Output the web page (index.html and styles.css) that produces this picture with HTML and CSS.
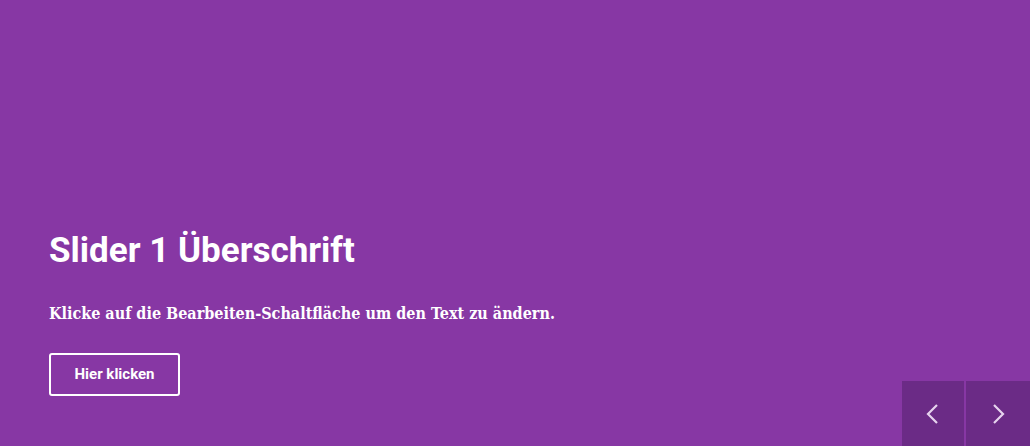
FILE: index.html
```html
<!DOCTYPE html>
<html lang="de">
<head>
<meta charset="utf-8">
<link rel="stylesheet" href="styles.css">
</head>
<body>
<section class="slider">
  <div class="slide-content">
    <h1 class="slide-title">Slider 1 Überschrift</h1>
    <p class="slide-text">Klicke auf die Bearbeiten-Schaltfläche um den Text zu ändern.</p>
    <a class="slide-btn" href="#">Hier klicken</a>
  </div>
  <div class="slider-nav">
    <button class="nav-btn" aria-label="Zurück">
      <svg width="16" height="22" viewBox="0 0 16 22"><path d="M12 2 L3 11 L12 20" fill="none" stroke="#e6d3ee" stroke-width="2.2"/></svg>
    </button>
    <button class="nav-btn" aria-label="Weiter">
      <svg width="16" height="22" viewBox="0 0 16 22"><path d="M4 2 L13 11 L4 20" fill="none" stroke="#e6d3ee" stroke-width="2.2"/></svg>
    </button>
  </div>
</section>
</body>
</html>
```
FILE: styles.css
```css
* { box-sizing: border-box; }
html, body { margin: 0; padding: 0; }
body { width: 1030px; height: 446px; overflow: hidden; font-family: Roboto, "Liberation Sans", sans-serif; }
.slider {
  position: relative;
  width: 1030px;
  height: 446px;
  background: #8737a4;
  display: flex;
  flex-direction: column;
  justify-content: flex-end;
  padding: 0 49px 50px;
}
.slide-content { display: flex; flex-direction: column; align-items: flex-start; }
.slide-title {
  margin: 0;
  color: #fff;
  font-family: Roboto, sans-serif;
  font-weight: 700;
  font-size: 35px;
  line-height: 40px;
}
.slide-text {
  margin: 31px 0 0;
  color: #fff;
  font-family: "DejaVu Serif", serif;
  font-stretch: condensed;
  font-weight: 700;
  font-size: 16px;
  line-height: 24px;
}
.slide-btn {
  margin-top: 27px;
  display: inline-block;
  border: 2px solid #fff;
  border-radius: 3px;
  color: #fff;
  text-decoration: none;
  font-family: Roboto, sans-serif;
  font-weight: 700;
  font-size: 15px;
  line-height: 39px;
  width: 131px;
  height: 43px;
  text-align: center;
}
.slider-nav {
  position: absolute;
  right: 0;
  bottom: 0;
  display: flex;
  gap: 2px;
}
.nav-btn {
  width: 62px;
  height: 65px;
  border: 0;
  padding: 0;
  background: #6b2b86;
  display: flex;
  align-items: center;
  justify-content: center;
}
.nav-btn:last-child { width: 64px; }
```
